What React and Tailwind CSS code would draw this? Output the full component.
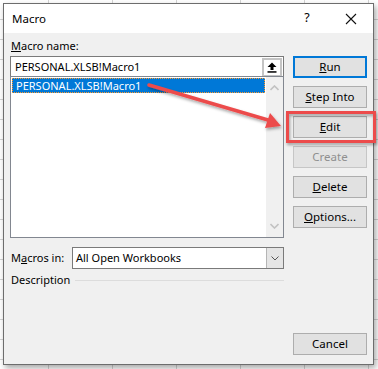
import React from "react";

function Btn({ children, className = "", disabled = false, def = false }) {
  return (
    <div
      className={
        "h-[22px] w-[74px] flex items-center justify-center text-[11.5px] " +
        (disabled
          ? "bg-[#e3e3e3] border border-[#c6c6c6] text-[#8f8f8f] "
          : def
          ? "bg-[#e1e1e1] border-2 border-[#0078d7] text-black "
          : "bg-[#e1e1e1] border border-[#adadad] text-black ") +
        className
      }
    >
      {children}
    </div>
  );
}

export default function App() {
  return (
    <div
      className="relative w-[378px] h-[369px] overflow-hidden bg-white bg-[linear-gradient(to_right,#d4d4d4_1px,transparent_1px),linear-gradient(to_bottom,#d4d4d4_1px,transparent_1px)] [background-size:64px_20px] [background-position:48px_19px] pt-[3px] pl-[3px]"
      style={{ fontFamily: '"Noto Sans", "Liberation Sans", sans-serif' }}
    >
      <div className="relative w-[371px] h-[362px] border border-[#6d6d6d] bg-[#f0f0f0] shadow-[2px_3px_6px_rgba(0,0,0,0.35)] flex flex-col">
        {/* title bar */}
        <div className="h-[29px] bg-white flex items-center pl-[8px] shrink-0">
          <span className="text-[11.5px] text-black flex-1">Macro</span>
          <span className="text-[12.5px] text-black w-[20px] text-center mr-[28px]">?</span>
          <svg width="12" height="12" viewBox="0 0 12 12" className="mr-[16px]">
            <path d="M1 1 L11 11 M11 1 L1 11" stroke="#111" strokeWidth="1.1" fill="none" />
          </svg>
        </div>
        {/* content */}
        <div className="flex-1 flex pl-[6px] pt-[5px] pb-[9px] text-[11px] text-black leading-[16px]">
          <div className="w-[274px] flex flex-col">
            <div className="h-[18px] pl-[1px]"><span className="underline">M</span>acro name:</div>
            {/* input */}
            <div className="h-[20px] bg-white border border-[#7a7a7a] border-b-0 flex items-center">
              <span className="pl-[4px] flex-1">PERSONAL.XLSB!Macro1</span>
              <div className="w-[20px] h-[19px] mt-[1px] border-2 border-[#c4c4c4] bg-white flex items-center justify-center mr-[1px]">
                <svg width="10" height="11" viewBox="0 0 10 11">
                  <path d="M5 0.5 L9.5 5 L6.5 5 L6.5 8 L3.5 8 L3.5 5 L0.5 5 Z" fill="#000" />
                  <rect x="0.5" y="9.2" width="9" height="1.5" fill="#000" />
                </svg>
              </div>
            </div>
            {/* list */}
            <div className="h-[162px] bg-white border border-[#828790] flex">
              <div className="flex-1 pt-[1px] pl-[1px]">
                <div className="h-[15px] bg-[#0078d7] text-white border border-dotted border-[#ff9a2e] flex items-center pl-[3px] leading-[13px] w-[253px]">
                  PERSONAL.XLSB!Macro1
                </div>
              </div>
              <div className="w-[17px] bg-[#f0f0f0] flex flex-col items-center justify-between py-[8px]">
                <svg width="9" height="6" viewBox="0 0 9 6"><path d="M0.5 5 L4.5 1 L8.5 5" stroke="#c2c2c2" strokeWidth="1.6" fill="none" /></svg>
                <svg width="9" height="6" viewBox="0 0 9 6"><path d="M0.5 1 L4.5 5 L8.5 1" stroke="#c2c2c2" strokeWidth="1.6" fill="none" /></svg>
              </div>
            </div>
            {/* macros in */}
            <div className="flex items-center mt-[9px]">
              <div className="w-[62px] pl-[1px]">M<span className="underline">a</span>cros in:</div>
              <div className="flex-1 h-[22px] bg-white border border-[#7a7a7a] flex items-center">
                <span className="pl-[3px] flex-1">All Open Workbooks</span>
                <div className="w-[17px] h-[20px] bg-[#e5e5e5] border-l border-[#b5b5b5] flex items-center justify-center">
                  <svg width="8" height="5" viewBox="0 0 8 5"><path d="M0.5 0.5 L4 4 L7.5 0.5" stroke="#555" strokeWidth="1" fill="none" /></svg>
                </div>
              </div>
            </div>
            <div className="flex items-center mt-[3px]">
              <span className="pl-[1px] pr-[5px]">Description</span>
              <div className="flex-1 h-px bg-[#dcdcdc]" />
            </div>
          </div>
          <div className="ml-[9px] pt-[18px] flex flex-col gap-[8px]">
            <Btn def><span className="underline">R</span>un</Btn>
            <Btn><span className="underline">S</span>tep Into</Btn>
            <Btn><span className="underline">E</span>dit</Btn>
            <Btn disabled>Create</Btn>
            <Btn><span className="underline">D</span>elete</Btn>
            <Btn><span className="underline">O</span>ptions...</Btn>
            <div className="flex-1" />
            <Btn>Cancel</Btn>
          </div>
        </div>
      </div>
      {/* annotation overlay */}
      <svg className="absolute left-0 top-0" width="378" height="369" viewBox="0 0 378 369">
        <defs>
          <filter id="sh" x="-10%" y="-10%" width="130%" height="150%">
            <feDropShadow dx="1" dy="2" stdDeviation="1.5" floodColor="#000" floodOpacity="0.35" />
          </filter>
        </defs>
        <g filter="url(#sh)">
          <path d="M149 85 L268 120" stroke="#ec4c4c" strokeWidth="3.5" strokeLinecap="round" fill="none" />
          <path d="M281 126 L265 128 L270 113 Z" fill="#ec4c4c" />
        </g>
        <rect x="287.5" y="112.5" width="87" height="29" stroke="#ec4c4c" strokeWidth="3" fill="none" filter="url(#sh)" />
      </svg>
    </div>
  );
}
